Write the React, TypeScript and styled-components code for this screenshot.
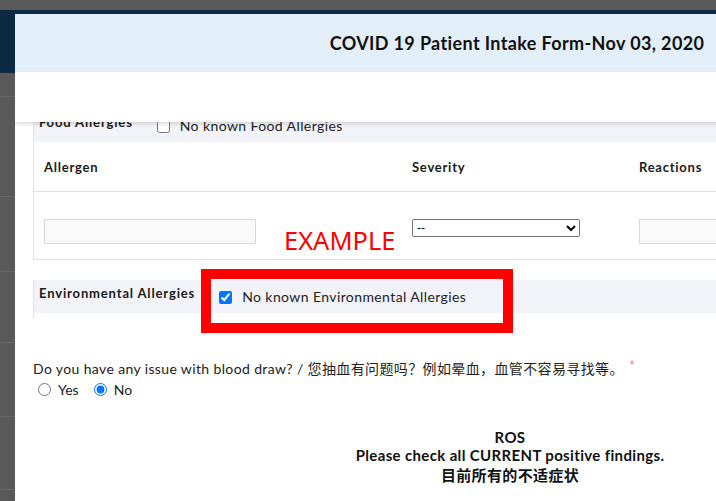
import * as React from 'react'
import styled, { createGlobalStyle } from 'styled-components'

const GlobalStyle = createGlobalStyle`
  html, body {
    margin: 0;
    padding: 0;
    overflow: hidden;
    background: #595959;
  }
  body {
    font-family: Lato, "Noto Sans CJK SC", sans-serif;
    color: #1b1b1b;
  }
`

const Screen = styled.div`
  position: relative;
  width: 716px;
  height: 501px;
  overflow: hidden;
`

const Backdrop = styled.div`
  display: flex;
  flex-direction: column;
  background: #595959;
`

const TopStrip = styled.div`
  height: 10px;
  background: #595959;
`

const NavBar = styled.div`
  height: 63px;
  background: #0c2a44;
`

const BackdropRow = styled.div<{ $h: number }>`
  height: ${(p) => p.$h}px;
  border-bottom: 1px solid #6a6a6a;
  box-sizing: border-box;
`

const Modal = styled.div`
  position: absolute;
  top: 14px;
  left: 15px;
  bottom: 0;
  width: 990px;
  background: #fff;
  display: flex;
  flex-direction: column;
  overflow: hidden;
`

const ModalHeader = styled.div`
  height: 58px;
  flex: none;
  background: #e3eff8;
  display: flex;
  align-items: center;
  justify-content: center;
  padding-left: 14px;
  font-size: 18px;
  letter-spacing: 0.37px;
  font-weight: 700;
  color: #111;
`

const StickyBar = styled.div`
  height: 50px;
  flex: none;
  background: #fff;
  position: relative;
  z-index: 2;
  box-shadow: 0 2px 4px rgba(0, 0, 0, 0.14);
`

const Body = styled.div`
  position: relative;
  margin-top: -13px;
  padding: 0 18px;
`

const Section = styled.div<{ $pb?: number }>`
  border-left: 1px solid #e2e2e2;
  padding-bottom: ${(p) => p.$pb ?? 0}px;
`

const Band = styled.div`
  height: 33px;
  background: #f2f3f8;
  display: flex;
  align-items: flex-start;
  gap: 20px;
  padding-left: 5px;
`

const BandLabel = styled.div`
  padding-top: 5px;
  font-size: 13px;
  line-height: 16px;
  letter-spacing: 0.85px;
  font-weight: 700;
  color: #1b1b1b;
`

const CheckLabel = styled.label`
  display: flex;
  align-items: center;
  padding-top: 8px;
  font-size: 14px;
  line-height: 18px;
  letter-spacing: 0.4px;
  color: #222;

  input {
    width: 13px;
    height: 13px;
    margin: 0 10px 0 4px;
  }
`

const Table = styled.table`
  width: 100%;
  border-collapse: collapse;
  table-layout: fixed;

  th {
    height: 49px;
    padding: 0 11px 0 10px;
    text-align: left;
    font-size: 13px;
    letter-spacing: 0.75px;
    font-weight: 700;
    color: #1b1b1b;
    border-bottom: 1px solid #e0e0e0;
    vertical-align: middle;
  }

  td {
    height: 68px;
    padding: 27px 11px 0 10px;
    vertical-align: top;
    border-bottom: 1px solid #e0e0e0;
    box-sizing: border-box;
  }
`

const TextInput = styled.input<{ $w: number }>`
  width: ${(p) => p.$w}px;
  height: 25px;
  box-sizing: border-box;
  border: 1px solid #d9d9d9;
  background: #fafafa;
  margin: 0;
  display: block;
`

const Select = styled.select`
  width: 168px;
  height: 18px;
  box-sizing: border-box;
  font-family: "Liberation Sans", Arial, sans-serif;
  font-size: 12px;
  margin: 0;
  display: block;
`

const EnvSection = styled(Section)`
  margin-top: 20px;
`

const Question = styled.div`
  margin-top: 41px;
  font-size: 14px;
  line-height: 20px;
  letter-spacing: 0.37px;
  color: #222;
`

const Required = styled.span`
  color: #f07e7e;
  font-family: "Liberation Sans", Arial, sans-serif;
  font-size: 12px;
  line-height: 12px;
  vertical-align: top;
  margin-left: 6px;
`

const RadioRow = styled.div`
  display: flex;
  align-items: center;
  height: 21px;
  gap: 10px;
  font-size: 14px;
  color: #222;
`

const RadioLabel = styled.label`
  display: flex;
  align-items: center;

  input {
    width: 13px;
    height: 13px;
    margin: 0 7px 0 5px;
  }
`

const Ros = styled.div`
  margin-top: 28px;
  text-align: center;
  font-weight: 700;
  color: #111;
`

const RosLine = styled.div<{ $lh: number }>`
  font-size: 15px;
  line-height: ${(p) => p.$lh}px;
  letter-spacing: 0.35px;
`

const AnnotationBox = styled.div`
  position: absolute;
  left: 201px;
  top: 269px;
  width: 312px;
  height: 64px;
  box-sizing: border-box;
  border: 10px solid #ff0000;
  pointer-events: none;
`

const AnnotationText = styled.div`
  position: absolute;
  left: 284px;
  top: 222px;
  font-family: "Noto Sans", "Open Sans", sans-serif;
  font-size: 25.5px;
  line-height: 36px;
  color: #ff0000;
`

const rows = [24, 100, 75, 71, 74, 73, 40]

const App: React.FC = () => {
  return (
    <Screen>
      <GlobalStyle />
      <Backdrop>
        <TopStrip />
        <NavBar />
        {rows.map((h, i) => (
          <BackdropRow key={i} $h={h} />
        ))}
      </Backdrop>
      <Modal>
        <ModalHeader>COVID 19 Patient Intake Form-Nov 03, 2020</ModalHeader>
        <StickyBar />
        <Body>
          <Section>
            <Band>
              <BandLabel>Food Allergies</BandLabel>
              <CheckLabel>
                <input type="checkbox" readOnly />
                No known Food Allergies
              </CheckLabel>
            </Band>
            <Table>
              <colgroup>
                <col style={{ width: 368 }} />
                <col style={{ width: 227 }} />
                <col />
              </colgroup>
              <thead>
                <tr>
                  <th>Allergen</th>
                  <th>Severity</th>
                  <th>Reactions</th>
                </tr>
              </thead>
              <tbody>
                <tr>
                  <td>
                    <TextInput $w={212} />
                  </td>
                  <td>
                    <Select defaultValue="">
                      <option value="">--</option>
                      <option value="mild">Mild</option>
                      <option value="moderate">Moderate</option>
                      <option value="severe">Severe</option>
                    </Select>
                  </td>
                  <td>
                    <TextInput $w={212} />
                  </td>
                </tr>
              </tbody>
            </Table>
          </Section>
          <EnvSection $pb={5}>
            <Band>
              <BandLabel>Environmental Allergies</BandLabel>
              <CheckLabel>
                <input type="checkbox" defaultChecked />
                No known Environmental Allergies
              </CheckLabel>
            </Band>
          </EnvSection>
          <Question>
            Do you have any issue with blood draw? / 您抽血有问题吗？例如晕血，血管不容易寻找等。
            <Required>*</Required>
          </Question>
          <RadioRow>
            <RadioLabel>
              <input type="radio" name="blood" />
              Yes
            </RadioLabel>
            <RadioLabel>
              <input type="radio" name="blood" defaultChecked />
              No
            </RadioLabel>
          </RadioRow>
          <Ros>
            <RosLine $lh={18}>ROS</RosLine>
            <RosLine $lh={18}>Please check all CURRENT positive findings.</RosLine>
            <RosLine $lh={23}>目前所有的不适症状</RosLine>
          </Ros>
        </Body>
      </Modal>
      <AnnotationText>EXAMPLE</AnnotationText>
      <AnnotationBox />
    </Screen>
  )
}

export default App
